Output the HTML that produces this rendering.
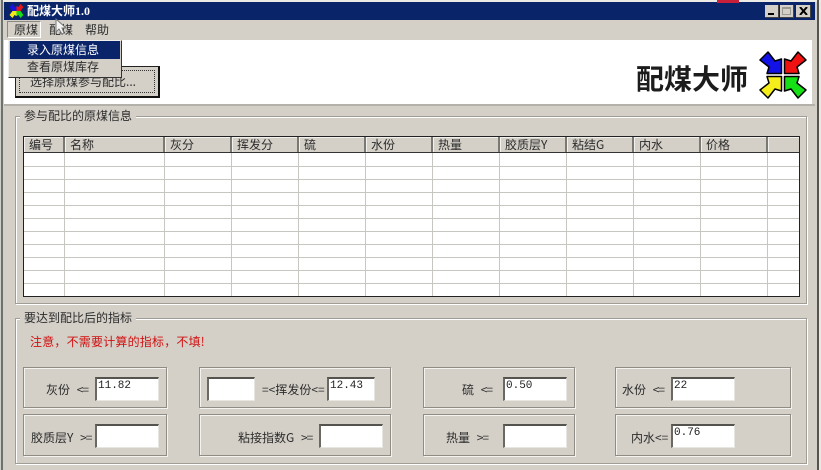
<!DOCTYPE html>
<html><head><meta charset="utf-8"><style>
html,body{margin:0;padding:0;background:#fff}
#w{position:relative;width:821px;height:470px;overflow:hidden;background:#e8e8e4;font:12px "Noto Sans CJK SC","WenQuanYi Zen Hei",sans-serif;color:#2c2c2c;filter:blur(.3px)}
#w div{position:absolute;box-sizing:border-box}
.t{white-space:nowrap;line-height:14px}
.grp{border:1px solid #a09d96;box-shadow:inset 1px 1px 0 #fff,1px 1px 0 #fff}
.leg{background:#d4d0c8;padding:0 4px;white-space:nowrap;line-height:14px}
.box{border:1px solid #8f8c86;box-shadow:inset 1px 1px 0 #f4f3f0,1px 1px 0 #f4f3f0}
.in{background:#fff;border-top:2px solid #55534e;border-left:2px solid #6a6862;border-right:1px solid #e8e6e0;border-bottom:1px solid #e8e6e0;font:11px/12px "Liberation Mono",monospace;padding:1px 0 0 1px;color:#222}
.hc{top:137px;height:15px;background:#d4d0c8;border-right:2px solid #7a7872;line-height:15px;padding-left:5px;white-space:nowrap;box-shadow:inset 1px 1px 0 #f2f1ee}
.vl{top:153px;height:143px;width:1px;background:#c8c6c0}
.hl{left:24px;width:775px;height:1px;background:#c8c6c0}
.le{margin-left:5px;letter-spacing:-1px}
</style></head><body><div id="w">
<div style="left:0;top:0;width:819px;height:470px;background:#d4d0c8"></div>
<div style="left:0;top:0;width:821px;height:2px;background:#eceae5"></div>
<div style="left:1px;top:0;width:2px;height:470px;background:#6f716e"></div>
<div style="left:0;top:0;width:1px;height:470px;background:#cfcfca"></div>
<div style="left:817px;top:0;width:2px;height:470px;background:#55544f"></div>
<div style="left:4px;top:2px;width:811px;height:18px;background:#0a246a"></div>
<div style="left:717px;top:0;width:22px;height:3px;background:#c8203a"></div>
<svg style="position:absolute;left:8px;top:3px" width="17" height="16" viewBox="-8 -8 16 16"><polygon points="0,0 -4,0 -7,-4 -4,-7 -2,-4 0,-5" fill="#1414e0"/><polygon points="0,0 4,0 7,-4 4,-7 2,-4 0,-5" fill="#e81414"/><polygon points="0,0 -4,0 -7,4 -4,7 -2,4 0,5" fill="#f4e818"/><polygon points="0,0 4,0 7,4 4,7 2,4 0,5" fill="#18d818"/></svg>
<div class="t" style="left:27px;top:4px;color:#fff;font-weight:bold">配煤大师<span style="font-family:'Liberation Serif',serif">1.0</span></div>
<div style="left:765px;top:5px;width:14px;height:13px;background:#d4d0c8;border-right:1px solid #444;border-bottom:1px solid #444"><div style="left:3px;top:8px;width:6px;height:2px;background:#000"></div></div>
<div style="left:780px;top:5px;width:14px;height:13px;background:#d4d0c8;border-right:1px solid #444;border-bottom:1px solid #444"><div style="left:2px;top:2px;width:9px;height:8px;border:1px solid #9a9892;border-top-width:2px"></div></div>
<div style="left:796px;top:5px;width:15px;height:13px;background:#d4d0c8;border-right:1px solid #444;border-bottom:1px solid #444"><svg style="position:absolute;left:3px;top:2px" width="9" height="8"><path d="M1 0L8 8M8 0L1 8" stroke="#000" stroke-width="2"/></svg></div>
<div style="left:7px;top:21px;width:34px;height:17px;border:1px solid;border-color:#8a8882 #fff #fff #8a8882"></div>
<div class="t" style="left:14px;top:23px">原煤</div>
<div class="t" style="left:49px;top:23px">配煤</div>
<div class="t" style="left:85px;top:23px">帮助</div>
<div style="left:4px;top:40px;width:808px;height:64px;background:#fff"></div>
<div style="left:4px;top:104px;width:811px;height:2px;background:#b4b1aa"></div>
<div style="left:15px;top:66px;width:145px;height:32px;background:#d4d0c8;border:1px solid #222;border-right:2px solid #111;border-bottom:2px solid #111"><div style="left:3px;top:3px;width:136px;height:23px;border:1px dotted #333"></div></div>
<div class="t" style="left:30px;top:75px">选择原煤参与配比...</div>
<div style="left:8px;top:40px;width:114px;height:38px;background:#d4d0c8;border:1px solid;border-color:#f0efec #333 #333 #f0efec"></div>
<div style="left:10px;top:41px;width:110px;height:18px;background:#0a246a"></div>
<div class="t" style="left:27px;top:43px;color:#fff">录入原煤信息</div>
<div class="t" style="left:27px;top:60px">查看原煤库存</div>
<svg style="position:absolute;left:55px;top:18px" width="14" height="18"><path d="M1 1V14L4 11L7 16L9 15L7 10H11Z" fill="#f4f4f4" stroke="#777" stroke-width="1"/></svg>
<div class="t" style="left:636px;top:60px;font-size:28px;line-height:36px;font-weight:bold;color:#1c1c1c">配煤大师</div>
<svg style="position:absolute;left:755px;top:48px" width="56" height="52" viewBox="-28 -27 56 52"><g stroke="#000" stroke-width="1.5" stroke-linejoin="round"><polygon points="-1.5,-1.5 -16,-1.5 -14,-8 -23,-15 -15,-23 -8,-14 -1.5,-16" fill="#1212e6"/><polygon points="1.5,-1.5 16,-1.5 14,-8 23,-15 15,-23 8,-14 1.5,-16" fill="#f01212"/><polygon points="-1.5,1.5 -16,1.5 -14,8 -23,15 -15,23 -8,14 -1.5,16" fill="#f6ee1a"/><polygon points="1.5,1.5 16,1.5 14,8 23,15 15,23 8,14 1.5,16" fill="#16e016"/></g></svg>
<div class="grp" style="left:15px;top:116px;width:792px;height:188px"></div>
<div class="leg" style="left:20px;top:109px">参与配比的原煤信息</div>
<div style="left:23px;top:136px;width:777px;height:161px;background:#fff;border:1px solid #222"></div>
<div class="hc" style="left:24px;width:41px">编号</div>
<div class="hc" style="left:65px;width:100px">名称</div>
<div class="hc" style="left:165px;width:67px">灰分</div>
<div class="hc" style="left:232px;width:67px">挥发分</div>
<div class="hc" style="left:299px;width:67px">硫</div>
<div class="hc" style="left:366px;width:67px">水份</div>
<div class="hc" style="left:433px;width:67px">热量</div>
<div class="hc" style="left:500px;width:67px">胶质层Y</div>
<div class="hc" style="left:567px;width:67px">粘结G</div>
<div class="hc" style="left:634px;width:67px">内水</div>
<div class="hc" style="left:701px;width:67px">价格</div>
<div class="hc" style="left:768px;width:31px;border-right:0"></div>
<div style="left:24px;top:152px;width:775px;height:1px;background:#333"></div>
<div class="vl" style="left:64px"></div><div class="vl" style="left:164px"></div><div class="vl" style="left:231px"></div><div class="vl" style="left:298px"></div><div class="vl" style="left:365px"></div><div class="vl" style="left:432px"></div><div class="vl" style="left:499px"></div><div class="vl" style="left:566px"></div><div class="vl" style="left:633px"></div><div class="vl" style="left:700px"></div><div class="vl" style="left:767px"></div>
<div class="hl" style="top:166px"></div><div class="hl" style="top:179px"></div><div class="hl" style="top:192px"></div><div class="hl" style="top:205px"></div><div class="hl" style="top:218px"></div><div class="hl" style="top:231px"></div><div class="hl" style="top:244px"></div><div class="hl" style="top:257px"></div><div class="hl" style="top:270px"></div><div class="hl" style="top:283px"></div>
<div class="grp" style="left:15px;top:318px;width:792px;height:146px"></div>
<div class="leg" style="left:20px;top:311px">要达到配比后的指标</div>
<div class="t" style="left:30px;top:335px;color:#d01010;letter-spacing:.2px">注意，不需要计算的指标，不填!</div>
<div class="box" style="left:23px;top:367px;width:144px;height:41px"></div>
<div class="box" style="left:199px;top:367px;width:192px;height:41px"></div>
<div class="box" style="left:423px;top:367px;width:152px;height:41px"></div>
<div class="box" style="left:615px;top:367px;width:176px;height:41px"></div>
<div class="box" style="left:23px;top:414px;width:144px;height:42px"></div>
<div class="box" style="left:199px;top:414px;width:192px;height:42px"></div>
<div class="box" style="left:423px;top:414px;width:152px;height:42px"></div>
<div class="box" style="left:615px;top:414px;width:176px;height:42px"></div>
<div class="in" style="left:95px;top:377px;width:64px;height:24px">11.82</div>
<div class="in" style="left:207px;top:377px;width:48px;height:24px"></div>
<div class="in" style="left:327px;top:377px;width:48px;height:24px">12.43</div>
<div class="in" style="left:503px;top:377px;width:64px;height:24px">0.50</div>
<div class="in" style="left:671px;top:377px;width:64px;height:24px">22</div>
<div class="in" style="left:95px;top:424px;width:64px;height:24px"></div>
<div class="in" style="left:319px;top:424px;width:64px;height:24px"></div>
<div class="in" style="left:503px;top:424px;width:64px;height:24px"></div>
<div class="in" style="left:671px;top:424px;width:64px;height:24px">0.76</div>
<div class="t" style="left:46px;top:383px">灰份<span class="le"> &lt;=</span></div>
<div class="t" style="left:262px;top:383px">=&lt;挥发份&lt;=</div>
<div class="t" style="left:462px;top:383px">硫<span class="le"> &lt;=</span></div>
<div class="t" style="left:622px;top:383px">水份<span class="le"> &lt;=</span></div>
<div class="t" style="left:31px;top:431px">胶质层Y<span class="le"> &gt;=</span></div>
<div class="t" style="left:238px;top:431px">粘接指数G<span class="le"> &gt;=</span></div>
<div class="t" style="left:446px;top:431px">热量<span class="le"> &gt;=</span></div>
<div class="t" style="left:631px;top:431px">内水&lt;=</div>
</div></body></html>
